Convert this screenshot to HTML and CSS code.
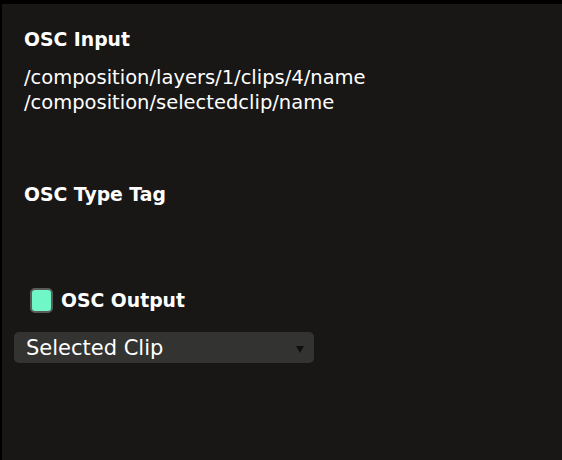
FILE: index.html
```html
<!DOCTYPE html>
<html>
<head>
<meta charset="utf-8">
<link rel="stylesheet" href="styles.css">
</head>
<body>
<div class="panel">
  <div class="section">
    <div class="label">OSC Input</div>
    <div class="paths">
      <div>/composition/layers/1/clips/4/name</div>
      <div>/composition/selectedclip/name</div>
    </div>
  </div>
  <div class="label type-tag">OSC Type Tag</div>
  <div class="output-row">
    <span class="checkbox"></span>
    <span class="label">OSC Output</span>
  </div>
  <div class="select">
    <span>Selected Clip</span>
    <span class="arrow"></span>
  </div>
</div>
</body>
</html>
```
FILE: styles.css
```css
html, body {
  margin: 0;
  padding: 0;
  background: #000;
}
body {
  width: 562px;
  height: 460px;
  overflow: hidden;
  font-family: "DejaVu Sans", "Liberation Sans", sans-serif;
  color: #fff;
}
.panel {
  margin: 4px 0 0 2px;
  height: 456px;
  background: #181715;
  padding: 0 0 0 22px;
  box-sizing: border-box;
  display: flex;
  flex-direction: column;
}
.label {
  font-weight: bold;
  font-size: 18.8px;
  line-height: 22px;
}
.section {
  padding-top: 25px;
}
.paths {
  margin-top: 14px;
  font-size: 19.5px;
  line-height: 25px;
}
.type-tag {
  margin-top: 69px;
}
.output-row {
  display: flex;
  align-items: center;
  gap: 8px;
  margin-top: 82px;
  margin-left: 6px;
}
.checkbox {
  width: 19px;
  height: 21px;
  border: 2px solid #5a5a5a;
  border-radius: 5px;
  background: #6ff7c8;
}
.select {
  margin: 19px 0 0 -10px;
  width: 300px;
  height: 31px;
  box-sizing: border-box;
  background: #333331;
  border-radius: 5px;
  display: flex;
  align-items: center;
  justify-content: space-between;
  padding: 0 10px 0 12px;
  font-size: 21px;
}
.arrow {
  width: 0;
  height: 0;
  border-left: 4px solid transparent;
  border-right: 4px solid transparent;
  border-top: 7px solid #111;
  margin-top: 4px;
}
```
